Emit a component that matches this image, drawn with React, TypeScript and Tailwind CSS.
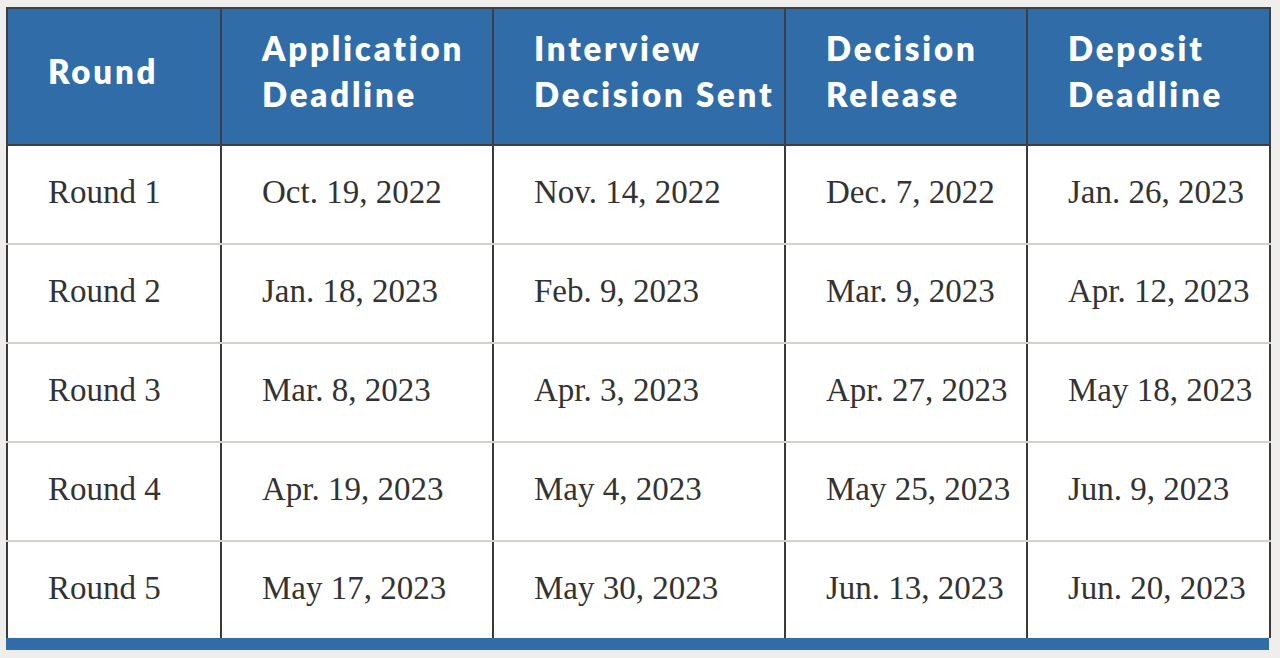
const headers = [
  ['Round'],
  ['Application', 'Deadline'],
  ['Interview', 'Decision Sent'],
  ['Decision', 'Release'],
  ['Deposit', 'Deadline'],
]

const rows = [
  ['Round 1', 'Oct. 19, 2022', 'Nov. 14, 2022', 'Dec. 7, 2022', 'Jan. 26, 2023'],
  ['Round 2', 'Jan. 18, 2023', 'Feb. 9, 2023', 'Mar. 9, 2023', 'Apr. 12, 2023'],
  ['Round 3', 'Mar. 8, 2023', 'Apr. 3, 2023', 'Apr. 27, 2023', 'May 18, 2023'],
  ['Round 4', 'Apr. 19, 2023', 'May 4, 2023', 'May 25, 2023', 'Jun. 9, 2023'],
  ['Round 5', 'May 17, 2023', 'May 30, 2023', 'Jun. 13, 2023', 'Jun. 20, 2023'],
]

const widths = ['w-[214px]', 'w-[272px]', 'w-[292px]', 'w-[242px]', 'w-[243px]']

export default function App() {
  return (
    <div className="h-[658px] w-[1280px] overflow-hidden bg-[#efeeec] pl-[6px] pt-[7px]">
      <table className="w-[1263px] table-fixed border-collapse">
        <thead>
          <tr className="h-[137px] bg-[#2f6ca8]">
            {headers.map((lines, index) => (
              <th
                key={index}
                className={`${widths[index]} border-2 border-[#3c3f44] px-0 pb-[12px] pl-[40px] text-left align-middle font-['Lato','Open_Sans',sans-serif] text-[33px] leading-[46px] font-extrabold tracking-[0.085em] text-white`}
              >
                {lines.map((line) => (
                  <div key={line} className="whitespace-nowrap">
                    {line}
                  </div>
                ))}
              </th>
            ))}
          </tr>
        </thead>
        <tbody>
          {rows.map((row, rowIndex) => {
            const last = rowIndex === rows.length - 1

            return (
              <tr key={rowIndex} className={last ? 'h-[97px] bg-white' : 'h-[99px] bg-white'}>
                {row.map((cell, index) => (
                  <td
                    key={index}
                    className={`border-x-2 border-x-[#3a3a3a] pl-[40px] align-middle font-['Liberation_Serif',serif] text-[33px] whitespace-nowrap text-[#333333] ${last ? 'border-b-0 pb-[2px]' : 'border-b-2 border-b-[#d4d2cb] pb-[4px]'}`}
                  >
                    {cell}
                  </td>
                ))}
              </tr>
            )
          })}
        </tbody>
      </table>
      <div className="h-[12px] w-[1263px] bg-[#2f6ca8]" />
    </div>
  )
}
